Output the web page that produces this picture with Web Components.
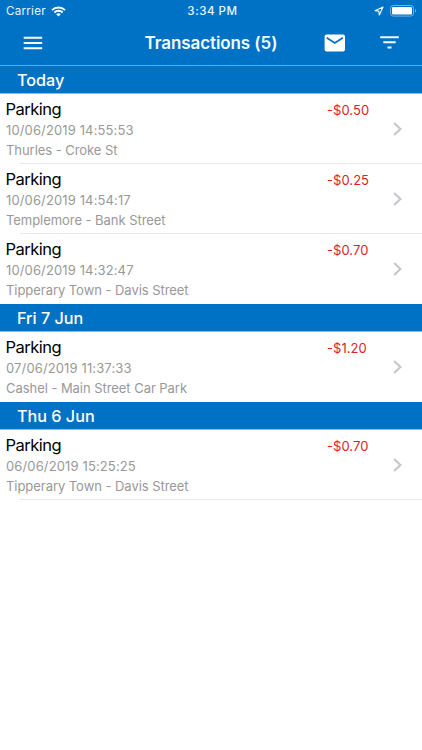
<!DOCTYPE html>
<html lang="en"><head><meta charset="utf-8"><title>Transactions</title>
<style>html,body{margin:0;background:#fff}body{font-family:Inter,"Liberation Sans",sans-serif}</style></head>
<body>
<transactions-screen></transactions-screen>
<script>
const define=(name,html,setup)=>customElements.define(name,class extends HTMLElement{
  connectedCallback(){
    if(this.shadowRoot)return;
    const root=this.attachShadow({mode:'open'});
    root.innerHTML=html;
    if(setup)setup(root,this);
  }
});

define('status-bar',`<style>
:host{display:grid;grid-template-columns:1fr auto 1fr;align-items:center;height:22px;color:#e9f6ff;font-size:11.6px;line-height:22px}
.left{display:flex;align-items:center;padding-left:6px;gap:5px;letter-spacing:.25px}
.time{font-weight:500;letter-spacing:.5px;padding-left:3px}
.right{display:flex;align-items:center;justify-content:flex-end;gap:6px;padding-right:5px}
svg{display:block}
</style>
<div class="left"><span>Carrier</span><svg width="15" height="11" viewBox="0 0 15 11" fill="none" stroke="#fff" stroke-width="2"><path d="M1 4.1C4.6.6 10.4.6 14 4.1M3.4 6.5c2.3-2.2 5.9-2.2 8.2 0"/><path d="M5.2 8.2c1.3-1.2 3.3-1.2 4.6 0L7.5 10.6z" fill="#fff" stroke="none"/></svg></div>
<span class="time">3:34 PM</span>
<div class="right"><svg width="10" height="10" viewBox="0 0 10 10" fill="none" stroke="#e9f6ff" stroke-width="1.2" stroke-linejoin="round"><path d="M9 1 5.3 9 4.8 5.2 1 4.7z"/></svg>
<svg width="27" height="12" viewBox="0 0 27 12"><rect x=".5" y=".5" width="23" height="10.6" rx="2.7" fill="none" stroke="#72b1e2"/><rect x="2" y="2" width="20" height="7.6" rx="1.3" fill="#fff"/><path d="M25 4c1.6.6 1.6 3 0 3.6z" fill="#72b1e2"/></svg></div>`);

define('nav-bar',`<style>
:host{display:grid;grid-template-columns:1fr auto 1fr;align-items:center;height:43px;color:#f3fbff;border-bottom:1px solid #66a9df}
.menu{padding:0 0 2px 23px}
h1{margin:0;font-size:17px;font-weight:600;line-height:42px;height:43px;letter-spacing:-.08px}
.actions{display:flex;align-items:center;justify-content:flex-end;gap:34px;padding:0 23.5px 2px 0}
svg{display:block}
</style>
<div class="menu"><svg width="20" height="14" viewBox="0 0 20 14" fill="#f3fbff"><path d="M.7.7h18.5v2H.7zM.7 6h18.5v2H.7zM.7 11.2h18.5v2H.7z"/></svg></div>
<h1><slot></slot></h1>
<div class="actions"><svg width="22" height="18" viewBox="0 0 22 18"><rect x=".6" y=".6" width="20.4" height="17" rx="2" fill="#fff"/><path d="m2.7 3.7 8.1 5.2 8.1-5.2" fill="none" stroke="#0072c6" stroke-width="1.8"/></svg>
<svg width="19" height="13" viewBox="0 0 19 13" fill="#f3fbff"><path d="M.2.2h18.6v2H.2zM3.3 5.3h12.4v2H3.3zM7.5 10.5h4v2h-4z"/></svg></div>`);

define('day-header',`<style>
:host{display:block;box-sizing:border-box;height:27.5px;padding-left:17px;background:#0072c6;color:#fff;border-bottom:1px solid #7fbdea;font-size:16.2px;font-weight:500;line-height:28px}
</style><slot></slot>`);

define('transaction-row',`<style>
:host{display:grid;grid-template-columns:1fr 50px 45px;box-sizing:border-box;height:70.3px;padding:4px 0 0 6px;background:linear-gradient(#e8e8ea,#e8e8ea) 20px 100%/100% 1px no-repeat}
:host([last]){background:none}
.name{font-size:16.5px;line-height:22px;color:#000;letter-spacing:-.5px;margin-left:-.5px}
.meta{font-size:13px;line-height:20px;color:#999;white-space:nowrap}
.meta+.meta{letter-spacing:-.05px}
.meta.time{letter-spacing:.13px}
.amount{font-size:13px;line-height:24px;color:#dc2328;letter-spacing:.05px}
.chev{padding:24px 0 0 15.5px}
svg{display:block}
</style>
<div><div class="name"><slot></slot></div><div class="meta time"><slot name="time"></slot></div><div class="meta"><slot name="place"></slot></div></div>
<div class="amount"><slot name="amount"></slot></div>
<div class="chev"><svg width="10" height="14" viewBox="0 0 10 14" fill="none" stroke="#c5c5ca" stroke-width="2"><path d="m1.2 1 6.2 6-6.2 6"/></svg></div>`);

define('transactions-screen',`<style>
:host{display:flex;flex-direction:column;height:750px;overflow:hidden;background:#fff}
header{background:#0072c6;flex:none}
main{flex:1}
</style>
<header><status-bar></status-bar><nav-bar>Transactions (5)</nav-bar></header><main></main>`,root=>{
  const groups=[
    ['Today',[['10/06/2019 14:55:53','Thurles - Croke St','-$0.50'],['10/06/2019 14:54:17','Templemore - Bank Street','-$0.25'],['10/06/2019 14:32:47','Tipperary Town - Davis Street','-$0.70']]],
    ['Fri 7 Jun',[['07/06/2019 11:37:33','Cashel - Main Street Car Park','-$1.20']]],
    ['Thu 6 Jun',[['06/06/2019 15:25:25','Tipperary Town - Davis Street','-$0.70']]]
  ];
  root.querySelector('main').innerHTML=groups.map(([day,rows],g)=>`<day-header>${day}</day-header>`+rows.map(([time,place,amount],i)=>
    `<transaction-row${i===rows.length-1&&g<groups.length-1?' last':''}>Parking<span slot="time">${time}</span><span slot="place">${place}</span><span slot="amount">${amount}</span></transaction-row>`).join('')).join('');
});
</script>
</body></html>
